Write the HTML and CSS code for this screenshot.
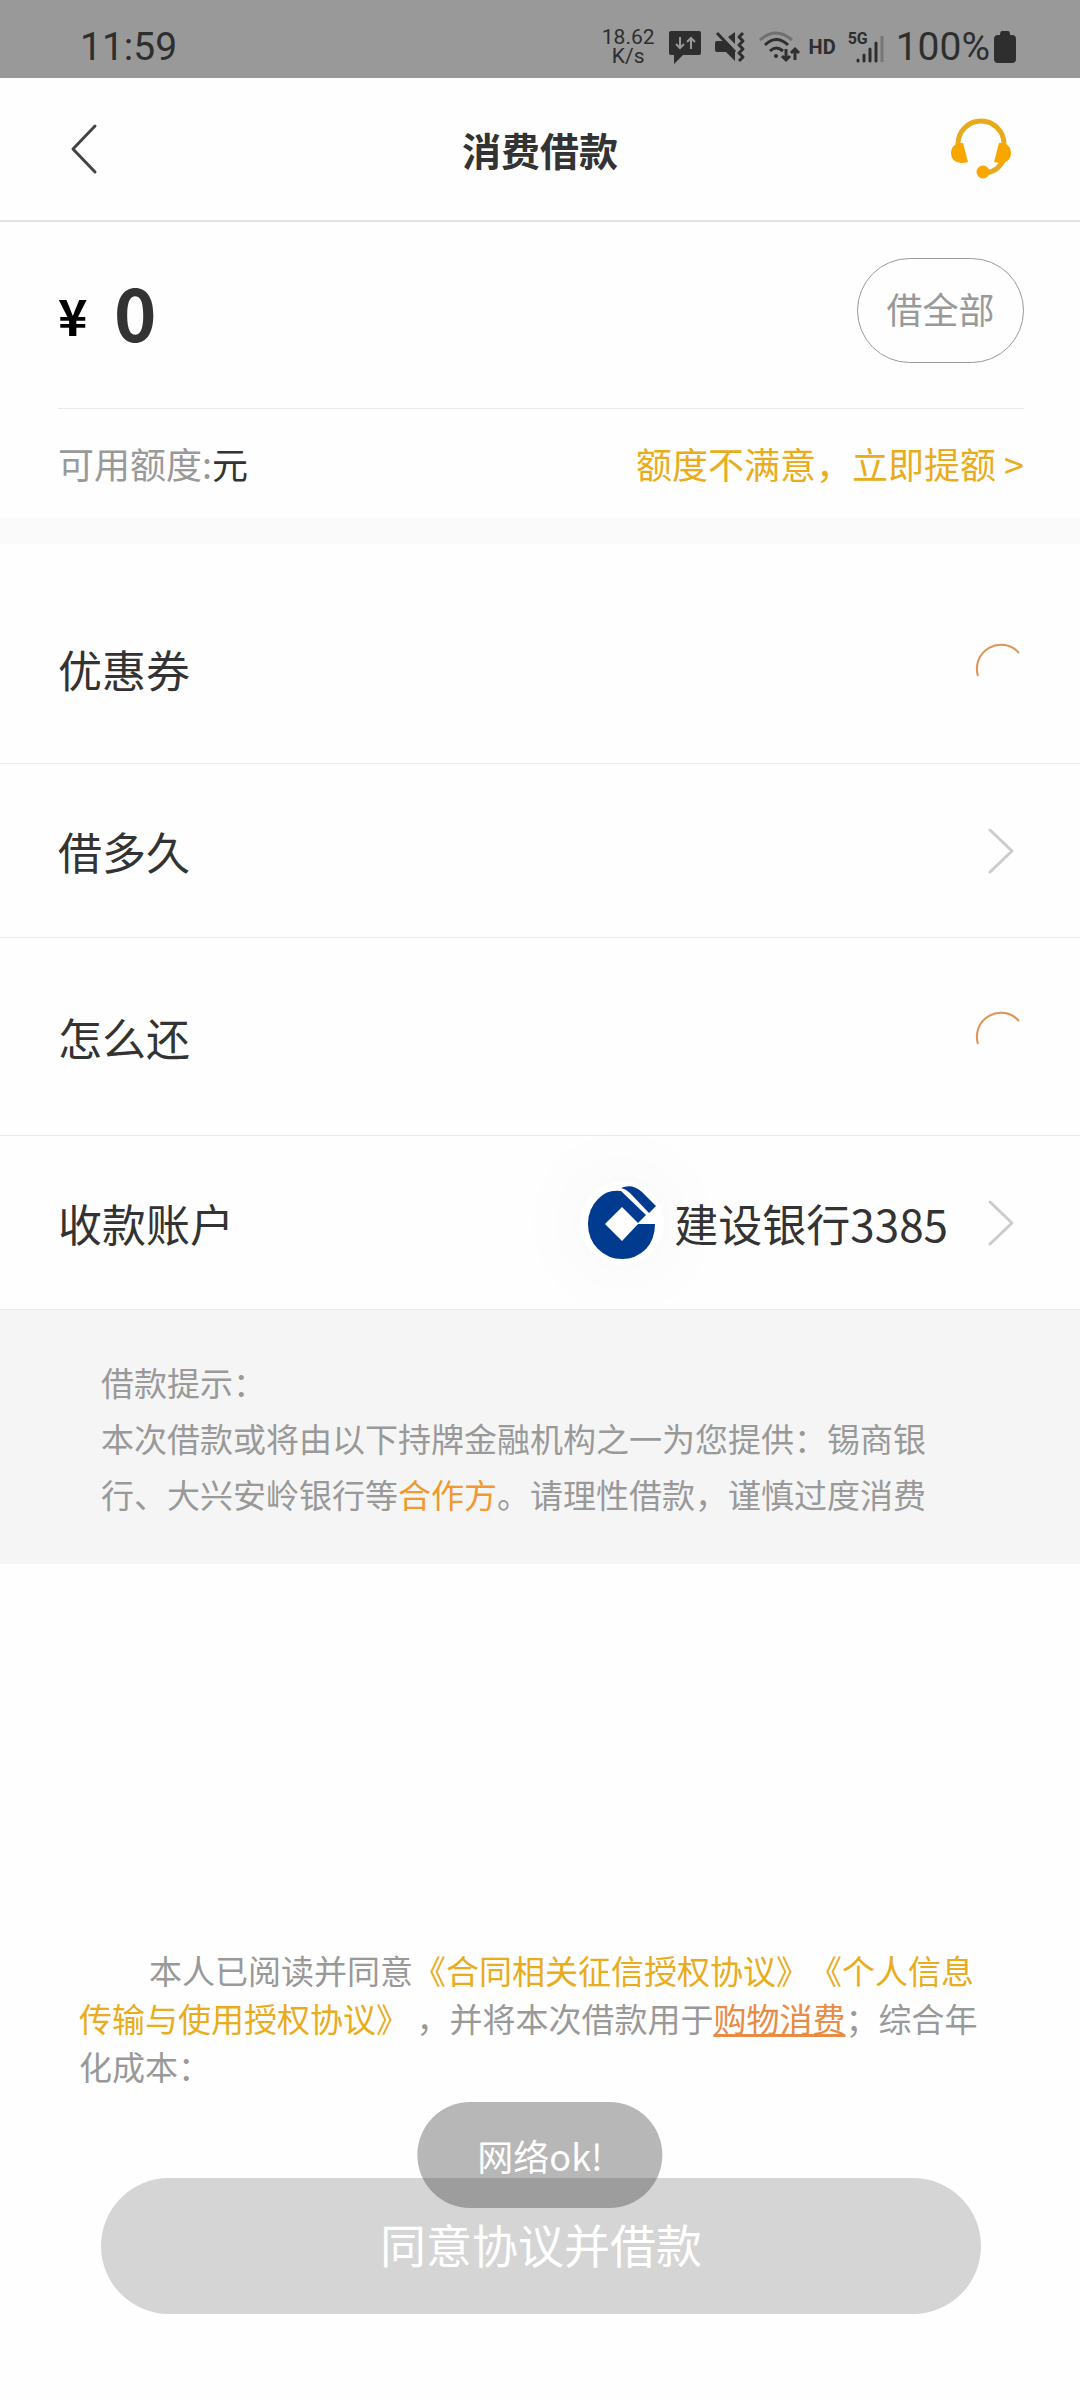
FILE: index.html
```html
<!DOCTYPE html>
<html lang="zh-CN">
<head>
    <meta charset="UTF-8">
    <meta name="viewport" content="width=device-width, initial-scale=1.0">
    <title>消费借款</title>
    <link rel="stylesheet" href="styles.css">
</head>
<body>

<div class="page">

    <div class="status-bar">
        <span class="time">11:59</span>
        <div class="status-icons">
            <div class="speed"><span>18.62</span><span>K/s</span></div>
            <svg class="icon-chat" width="32" height="32" viewBox="0 0 32 32">
                <path d="M2 0h28q2 0 2 2v20q0 2-2 2H14l-9 9v-9H2q-2 0-2-2V2q0-2 2-2z" fill="#2e2e2e"/>
                <path d="M11 6v11M7 13l4 4 4-4M22 18V7M18 11l4-4 4 4" fill="none" stroke="#999" stroke-width="2"/>
            </svg>
            <svg class="icon-mute" width="30" height="32" viewBox="0 0 30 32">
                <path d="M2 10h6l12 11v9l-9-9H2q-2 0-2-2v-7q0-2 2-2zM20 1v12l-7-7z" fill="#2e2e2e"/>
                <path d="M2 2l18 19" stroke="#2e2e2e" stroke-width="3"/>
                <path d="M28 2l-4 4 4 4-4 4 4 4-4 4 4 4-4 4" fill="none" stroke="#2e2e2e" stroke-width="3" stroke-linejoin="round"/>
            </svg>
            <svg class="icon-wifi" width="42" height="32" viewBox="0 0 42 32">
                <path d="M1 9Q17-5 33 9" fill="none" stroke="#707070" stroke-width="3"/>
                <path d="M6 14q11-11 23 0M11 20q6-6 13 0" fill="none" stroke="#2e2e2e" stroke-width="3"/>
                <circle cx="17" cy="25" r="2" fill="#2e2e2e"/>
                <path d="M27 18v11M23 25l4 4 4-4M36 29V18M32 22l4-4 4 4" fill="none" stroke="#2e2e2e" stroke-width="3"/>
            </svg>
            <span class="hd">HD</span>
            <div class="signal">
                <span>5G</span>
                <svg width="36" height="32" viewBox="0 0 36 32">
                    <path d="M10 29v1M16 24v6M22 18v12M28 12v18" stroke="#2e2e2e" stroke-width="3" stroke-linecap="round"/>
                    <path d="M34 5v26" stroke="#777" stroke-width="3"/>
                </svg>
            </div>
            <span class="battery-text">100%</span>
            <svg width="22" height="32" viewBox="0 0 22 32">
                <path d="M8 0h6q2 0 2 4h2q4 0 4 4v20q0 4-4 4H4q-4 0-4-4V8q0-4 4-4h2q0-4 2-4z" fill="#2e2e2e"/>
            </svg>
        </div>
    </div>

    <header class="nav">
        <button class="nav-btn" aria-label="返回">
            <svg width="26" height="50" viewBox="0 0 26 50">
                <path d="M24 2L2 25l22 23" fill="none" stroke="#444" stroke-width="3" stroke-linecap="round" stroke-linejoin="round"/>
            </svg>
        </button>
        <h1>消费借款</h1>
        <button class="nav-btn" aria-label="客服">
            <svg width="60" height="60" viewBox="0 0 60 60">
                <path d="M7 26V25a23 23 0 0 1 46 0v1" fill="none" stroke="#e8aa1c" stroke-width="5"/>
                <path d="M53 40q-6 13-19 14" fill="none" stroke="#e8aa1c" stroke-width="5"/>
                <path d="M5 25v-1h7l5 19q-3 1-7 1-10-1-10-10 0-6 5-9zM55 25v-1h-7l-5 19q3 1 7 1 10-1 10-10 0-6-5-9z" fill="#f9a700"/>
                <circle cx="32" cy="53" r="6.5" fill="#f9a700"/>
            </svg>
        </button>
    </header>

    <section class="amount">
        <div class="amount-row">
            <label for="amount">¥</label>
            <input type="text" id="amount" value="0" inputmode="numeric">
            <button class="all-btn">借全部</button>
        </div>
        <div class="limit-row">
            <p>可用额度:<span>元</span></p>
            <a href="#">额度不满意，立即提额 &gt;</a>
        </div>
    </section>

    <section class="options">
        <button class="option loading">
            <span>优惠券</span>
            <svg class="spinner" width="50" height="50" viewBox="0 0 50 50">
                <path d="M2 32A24 24 0 0 1 43 9" fill="none" stroke="#dd9454" stroke-width="2"/>
            </svg>
        </button>
        <button class="option">
            <span>借多久</span>
            <svg class="arrow" width="26" height="46" viewBox="0 0 26 46">
                <path d="M2 2l22 21L2 44" fill="none" stroke="#ccc" stroke-width="3" stroke-linecap="round" stroke-linejoin="round"/>
            </svg>
        </button>
        <button class="option loading">
            <span>怎么还</span>
            <svg class="spinner" width="50" height="50" viewBox="0 0 50 50">
                <path d="M2 32A24 24 0 0 1 43 9" fill="none" stroke="#dd9454" stroke-width="2"/>
            </svg>
        </button>
        <button class="option">
            <span>收款账户</span>
            <span class="bank">
                <span class="bank-logo">
                    <svg width="68" height="74" viewBox="0 0 68 74">
                        <path d="M33 5Q19 3 10 13 0 23 0 38t10 25q10 10 24 10t24-10q9-10 9-25H50L34 55 17 38l17-17 16 16 8-8z" fill="#003b90"/>
                        <path d="M33 2q11-5 21 4l14 14-7 7L42 7q-4-4-9-5z" fill="#003b90"/>
                    </svg>
                </span>
                建设银行3385
            </span>
            <svg class="arrow" width="26" height="46" viewBox="0 0 26 46">
                <path d="M2 2l22 21L2 44" fill="none" stroke="#ccc" stroke-width="3" stroke-linecap="round" stroke-linejoin="round"/>
            </svg>
        </button>
    </section>

    <section class="tips">
        <p>借款提示：</p>
        <p>本次借款或将由以下持牌金融机构之一为您提供：锡商银行、大兴安岭银行等<a href="#">合作方</a>。请理性借款，谨慎过度消费</p>
    </section>

    <footer class="footer">
        <p class="agreement">本人已阅读并同意<a href="#">《合同相关征信授权协议》</a><a href="#">《个人信息传输与使用授权协议》</a> ，并将本次借款用于<a href="#" class="purpose">购物消费</a>；综合年化成本：</p>
        <div class="submit">
            <button id="submitBtn" class="submit-btn">同意协议并借款</button>
            <div class="toast">网络ok!</div>
        </div>
    </footer>

</div>

</body>
</html>
```

FILE: styles.css
```css
* {
    box-sizing: border-box;
}

body {
    margin: 0;
    font-family: "Noto Sans CJK SC", sans-serif;
    background-color: #fefefe;
    color: #333;
    text-spacing-trim: space-all;
}

h1, p {
    margin: 0;
}

a {
    color: #e8ac1c;
    text-decoration: none;
}

button, input {
    font-family: inherit;
    color: inherit;
    background: none;
    border: none;
    padding: 0;
}

button {
    cursor: pointer;
}

svg {
    display: block;
    flex-shrink: 0;
    overflow: visible;
}

.page {
    display: flex;
    flex-direction: column;
    min-height: 100vh;
}

/* status bar */
.status-bar {
    display: flex;
    justify-content: space-between;
    align-items: center;
    height: 78px;
    padding: 16px 64px 0 80px;
    background-color: #999;
    color: #2e2e2e;
    font-family: Roboto, sans-serif;
}

.time, .battery-text {
    font-size: 39px;
    line-height: 40px;
}

.battery-text {
    margin-left: 12px;
    margin-right: 4px;
}

.status-icons {
    display: flex;
    align-items: center;
}

.speed {
    display: flex;
    flex-direction: column;
    align-items: center;
    font-size: 21px;
    line-height: 19px;
    margin-right: 14px;
}

.icon-chat, .icon-mute {
    margin-right: 14px;
}

.icon-wifi {
    margin-right: 8px;
}

.hd {
    font-size: 20px;
    font-weight: 700;
    margin-right: 12px;
}

.signal {
    position: relative;
}

.signal span {
    position: absolute;
    top: 0;
    left: 0;
    font-size: 16px;
    line-height: 16px;
    font-weight: 700;
}

/* title bar */
.nav {
    display: flex;
    justify-content: space-between;
    align-items: center;
    height: 144px;
    padding: 0 68px;
    border-bottom: 2px solid #e2e2e2;
}

.nav-btn {
    width: 64px;
    height: 64px;
    display: flex;
    align-items: center;
    padding-left: 3px;
}

.nav h1 {
    font-size: 39px;
    line-height: 58px;
    font-weight: 700;
}

/* amount */
.amount {
    padding: 0 56px 0 58px;
    border-bottom: 27px solid #fafafa;
}

.amount-row {
    display: flex;
    align-items: center;
    height: 187px;
    padding-bottom: 10px;
    border-bottom: 1px solid #eaeaea;
}

.amount-row label {
    width: 56px;
    padding-top: 8px;
    font-size: 50px;
    line-height: 76px;
    font-weight: 700;
    color: #000;
}

.amount-row input {
    flex: 1;
    min-width: 0;
    height: 106px;
    font-size: 72px;
    font-weight: 700;
}

.all-btn {
    width: 167px;
    height: 105px;
    padding-bottom: 4px;
    border: 1px solid #999;
    border-radius: 53px;
    font-size: 36px;
    color: #999;
}

.limit-row {
    display: flex;
    justify-content: space-between;
    align-items: center;
    height: 108px;
    font-size: 36px;
}

.limit-row p {
    color: #999;
}

.limit-row span {
    color: #333;
}

/* options */
.options {
    padding-top: 22px;
}

.option {
    display: flex;
    align-items: center;
    width: 100%;
    height: 174px;
    padding: 0 54px 0 58px;
    border-bottom: 1px solid #eaeaea;
    font-size: 44px;
    line-height: 64px;
    text-align: left;
}

.option.loading {
    height: 198px;
}

.option:first-child {
    padding-top: 8px;
}

.option .spinner, .option .arrow {
    margin-left: auto;
}

.option .arrow {
    margin-right: 12px;
}

.bank {
    display: flex;
    align-items: center;
    margin-left: auto;
}

.bank + .arrow {
    margin-left: 40px;
}

.bank-logo {
    display: flex;
    align-items: center;
    justify-content: center;
    width: 84px;
    height: 84px;
    margin-right: 10px;
    border-radius: 50%;
    background-color: #fff;
    box-shadow: 0 0 90px rgba(0, 0, 0, 0.05);
}

/* tips */
.tips {
    padding: 44px 101px 42px;
    background-color: #f5f5f5;
    font-size: 33px;
    line-height: 56px;
    color: #999;
}

.tips a {
    color: #f09a30;
}

/* footer */
.footer {
    margin-top: auto;
    padding: 0 79px 86px;
}

.agreement {
    font-size: 33px;
    line-height: 48px;
    color: #999;
    text-indent: 70px;
}

.agreement .purpose {
    color: #e88b45;
    text-decoration: underline;
    text-decoration-thickness: 3px;
}

.submit {
    position: relative;
    padding: 88px 20px 0 22px;
}

.submit-btn {
    display: block;
    width: 100%;
    height: 136px;
    padding-bottom: 6px;
    border-radius: 68px;
    background-color: #d5d5d5;
    color: #fff;
    font-size: 46px;
}

.toast {
    position: absolute;
    left: 50%;
    bottom: 106px;
    transform: translateX(-50%);
    padding: 0 60px;
    border-radius: 53px;
    background-color: rgba(58, 58, 58, 0.36);
    color: #fff;
    font-size: 36px;
    line-height: 106px;
    white-space: nowrap;
}
```
